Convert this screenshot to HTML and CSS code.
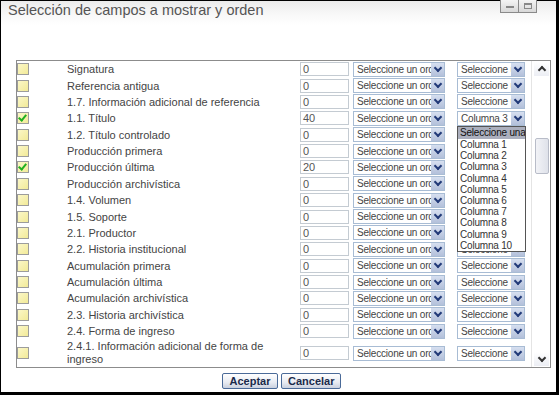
FILE: index.html
```html
<!DOCTYPE html>
<html lang="es">
<head>
    <meta charset="UTF-8">
    <meta name="viewport" content="width=device-width, initial-scale=1.0">
    <title>Selección de campos</title>
    <link rel="stylesheet" href="styles.css">
</head>
<body>
    <div class="ventana">
        <div class="cabecera">
            <h2 class="titulo">Selección de campos a mostrar y orden</h2>
            <div class="botones-ventana">
                <span class="bv"><svg width="10" height="8" viewBox="0 0 10 8"><rect x="1" y="4" width="8" height="2" fill="#888"/></svg></span>
                <span class="bv"><svg width="10" height="8" viewBox="0 0 10 8"><rect x="1.5" y="1.5" width="7" height="5" fill="none" stroke="#888"/><rect x="1" y="1" width="8" height="2" fill="#888"/></svg></span>
            </div>
        </div>

        <div class="panel">
            <div class="lista">
                <div class="fila"><span class="check"></span><span class="campo">Signatura</span><span class="caja">0</span><span class="combo orden"><span class="txt">Seleccione un orden</span><span class="flecha"></span></span><span class="combo columna"><span class="txt">Seleccione una</span><span class="flecha"></span></span></div>
                <div class="fila"><span class="check"></span><span class="campo">Referencia antigua</span><span class="caja">0</span><span class="combo orden"><span class="txt">Seleccione un orden</span><span class="flecha"></span></span><span class="combo columna"><span class="txt">Seleccione una</span><span class="flecha"></span></span></div>
                <div class="fila"><span class="check"></span><span class="campo">1.7. Información adicional de referencia</span><span class="caja">0</span><span class="combo orden"><span class="txt">Seleccione un orden</span><span class="flecha"></span></span><span class="combo columna"><span class="txt">Seleccione una</span><span class="flecha"></span></span></div>
                <div class="fila"><span class="check marcado"></span><span class="campo">1.1. Título</span><span class="caja">40</span><span class="combo orden"><span class="txt">Seleccione un orden</span><span class="flecha"></span></span><span class="combo columna"><span class="txt">Columna 3</span><span class="flecha"></span></span></div>
                <div class="fila"><span class="check"></span><span class="campo">1.2. Título controlado</span><span class="caja">0</span><span class="combo orden"><span class="txt">Seleccione un orden</span><span class="flecha"></span></span><span class="combo columna"><span class="txt">Seleccione una</span><span class="flecha"></span></span></div>
                <div class="fila"><span class="check"></span><span class="campo">Producción primera</span><span class="caja">0</span><span class="combo orden"><span class="txt">Seleccione un orden</span><span class="flecha"></span></span><span class="combo columna"><span class="txt">Seleccione una</span><span class="flecha"></span></span></div>
                <div class="fila"><span class="check marcado"></span><span class="campo">Producción última</span><span class="caja">20</span><span class="combo orden"><span class="txt">Seleccione un orden</span><span class="flecha"></span></span><span class="combo columna"><span class="txt">Seleccione una</span><span class="flecha"></span></span></div>
                <div class="fila"><span class="check"></span><span class="campo">Producción archivística</span><span class="caja">0</span><span class="combo orden"><span class="txt">Seleccione un orden</span><span class="flecha"></span></span><span class="combo columna"><span class="txt">Seleccione una</span><span class="flecha"></span></span></div>
                <div class="fila"><span class="check"></span><span class="campo">1.4. Volumen</span><span class="caja">0</span><span class="combo orden"><span class="txt">Seleccione un orden</span><span class="flecha"></span></span><span class="combo columna"><span class="txt">Seleccione una</span><span class="flecha"></span></span></div>
                <div class="fila"><span class="check"></span><span class="campo">1.5. Soporte</span><span class="caja">0</span><span class="combo orden"><span class="txt">Seleccione un orden</span><span class="flecha"></span></span><span class="combo columna"><span class="txt">Seleccione una</span><span class="flecha"></span></span></div>
                <div class="fila"><span class="check"></span><span class="campo">2.1. Productor</span><span class="caja">0</span><span class="combo orden"><span class="txt">Seleccione un orden</span><span class="flecha"></span></span><span class="combo columna"><span class="txt">Seleccione una</span><span class="flecha"></span></span></div>
                <div class="fila"><span class="check"></span><span class="campo">2.2. Historia institucional</span><span class="caja">0</span><span class="combo orden"><span class="txt">Seleccione un orden</span><span class="flecha"></span></span><span class="combo columna"><span class="txt">Seleccione una</span><span class="flecha"></span></span></div>
                <div class="fila"><span class="check"></span><span class="campo">Acumulación primera</span><span class="caja">0</span><span class="combo orden"><span class="txt">Seleccione un orden</span><span class="flecha"></span></span><span class="combo columna"><span class="txt">Seleccione una</span><span class="flecha"></span></span></div>
                <div class="fila"><span class="check"></span><span class="campo">Acumulación última</span><span class="caja">0</span><span class="combo orden"><span class="txt">Seleccione un orden</span><span class="flecha"></span></span><span class="combo columna"><span class="txt">Seleccione una</span><span class="flecha"></span></span></div>
                <div class="fila"><span class="check"></span><span class="campo">Acumulación archivística</span><span class="caja">0</span><span class="combo orden"><span class="txt">Seleccione un orden</span><span class="flecha"></span></span><span class="combo columna"><span class="txt">Seleccione una</span><span class="flecha"></span></span></div>
                <div class="fila"><span class="check"></span><span class="campo">2.3. Historia archivística</span><span class="caja">0</span><span class="combo orden"><span class="txt">Seleccione un orden</span><span class="flecha"></span></span><span class="combo columna"><span class="txt">Seleccione una</span><span class="flecha"></span></span></div>
                <div class="fila"><span class="check"></span><span class="campo">2.4. Forma de ingreso</span><span class="caja">0</span><span class="combo orden"><span class="txt">Seleccione un orden</span><span class="flecha"></span></span><span class="combo columna"><span class="txt">Seleccione una</span><span class="flecha"></span></span></div>
                <div class="fila doble"><span class="check"></span><span class="campo">2.4.1. Información adicional de forma de ingreso</span><span class="caja">0</span><span class="combo orden"><span class="txt">Seleccione un orden</span><span class="flecha"></span></span><span class="combo columna"><span class="txt">Seleccione una</span><span class="flecha"></span></span></div>

                <!-- desplegable abierto de la fila 1.1. Título -->
                <ul class="desplegable">
                    <li class="activo">Seleccione una</li>
                    <li>Columna 1</li>
                    <li>Columna 2</li>
                    <li>Columna 3</li>
                    <li>Columna 4</li>
                    <li>Columna 5</li>
                    <li>Columna 6</li>
                    <li>Columna 7</li>
                    <li>Columna 8</li>
                    <li>Columna 9</li>
                    <li>Columna 10</li>
                </ul>
            </div>
            <div class="scroll">
                <span class="sb-boton arriba"></span>
                <div class="sb-pista"><span class="sb-thumb"></span></div>
                <span class="sb-boton abajo"></span>
            </div>
        </div>

        <div class="pie">
            <button class="boto">Aceptar</button>
            <button class="boto">Cancelar</button>
        </div>
    </div>
</body>
</html>
```

FILE: styles.css
```css
html {
    height: 100%;
}
body {
    margin: 0;
    background: #000;
    font-family: 'Liberation Sans', Arial, sans-serif;
}

.ventana {
    width: 555px;
    height: 391px;
    margin: 1px 3px 3px 1px;
    background: #fff;
    display: flex;
    flex-direction: column;
}

.cabecera {
    height: 59px;
    display: flex;
    justify-content: space-between;
    align-items: flex-start;
    background: linear-gradient(180deg, #ebebeb 0px, #f7f7f7 12px, #fff 24px);
}

.titulo {
    margin: 1px 0 0 7px;
    font-size: 14.5px;
    font-weight: normal;
    color: #555;
    line-height: 17px;
}

.botones-ventana {
    display: flex;
    margin-right: 19px;
    margin-top: -2px;
}

.bv {
    width: 17px;
    height: 12px;
    border: 1px solid #8a8a8a;
    background: linear-gradient(180deg, #f4f4f4, #d8d8d8);
    display: flex;
    align-items: center;
    justify-content: center;
}

.bv + .bv {
    border-left: none;
}

.panel {
    margin-left: 15px;
    width: 535px;
    height: 308px;
    box-sizing: border-box;
    border: 1px solid #8c8c8c;
    display: flex;
}

.lista {
    flex: 1;
    position: relative;
}

.fila {
    display: grid;
    grid-template-columns: 50px 233px 53px 104px 70px;
    align-items: center;
    height: 16.375px;
    font-size: 11px;
    color: #444;
}

.fila.doble {
    height: 28px;
    line-height: 13px;
}

.check {
    width: 10px;
    height: 10px;
    border: 1px solid #9c9c9c;
    background: linear-gradient(135deg, #fbf7c8, #f2ea98);
    position: relative;
}

.check.marcado::after {
    content: "";
    position: absolute;
    left: 2px;
    top: 0px;
    width: 3px;
    height: 6px;
    border: solid #20b020;
    border-width: 0 2px 2px 0;
    transform: rotate(40deg);
}

.campo {
    white-space: normal;
}

.caja {
    width: 45px;
    height: 12px;
    border: 1px solid #c4cbd2;
    padding-left: 2px;
    line-height: 12px;
    color: #555;
    box-sizing: content-box;
}

.combo {
    height: 13px;
    border: 1px solid #a8bcd4;
    display: flex;
    background: #fff;
}

.combo.orden {
    width: 90px;
}

.combo.columna {
    width: 66px;
}

.combo .txt {
    flex: 1;
    overflow: hidden;
    white-space: nowrap;
    padding-left: 3px;
    line-height: 13px;
    font-size: 10px;
    letter-spacing: -0.2px;
    color: #444;
}

.flecha {
    width: 13px;
    height: 13px;
    background: linear-gradient(180deg, #d6dff0, #b3c0da);
    position: relative;
}

.flecha::after {
    content: "";
    position: absolute;
    left: 3.5px;
    top: 2px;
    width: 4px;
    height: 4px;
    border: solid #223a78;
    border-width: 0 2px 2px 0;
    transform: rotate(45deg);
}

.desplegable {
    position: absolute;
    left: 440px;
    top: 65px;
    width: 67px;
    margin: 0;
    padding: 0;
    list-style: none;
    border: 1px solid #555;
    background: #fff;
    font-size: 10px;
    letter-spacing: -0.2px;
    color: #333;
}

.desplegable li {
    height: 11.2px;
    line-height: 11px;
    padding-left: 2px;
    white-space: nowrap;
    overflow: hidden;
}

.desplegable li.activo {
    background: #abafbd;
    color: #111;
    height: 12px;
}

.scroll {
    width: 18px;
    border-left: 1px solid #e4e4e4;
    display: flex;
    flex-direction: column;
    background: #fff;
}

.sb-boton {
    height: 14px;
    margin: 1px 1px 1px 2px;
    position: relative;
    background: linear-gradient(180deg, #fff, #eceef4);
}

.sb-boton::after {
    content: "";
    position: absolute;
    left: 5px;
    width: 4px;
    height: 4px;
    border: solid #333;
    border-width: 0 2px 2px 0;
}

.sb-boton.arriba::after {
    top: 5px;
    transform: rotate(-135deg);
}

.sb-boton.abajo::after {
    top: 3px;
    transform: rotate(45deg);
}

.sb-pista {
    flex: 1;
    padding-top: 61px;
}

.sb-thumb {
    display: block;
    width: 12px;
    height: 34px;
    margin-left: 3px;
    border: 1px solid #b8bcc8;
    border-radius: 2px;
    background: linear-gradient(90deg, #f2f3f7, #dfe2ea) ;
}

.pie {
    display: flex;
    justify-content: center;
    gap: 3px;
    padding-top: 5px;
    padding-left: 6px;
}

.boto {
    height: 16px;
    padding: 0 6px;
    font-family: 'Liberation Sans', Arial, sans-serif;
    font-size: 11px;
    font-weight: bold;
    color: #1a2a4a;
    border: 1px solid #4a6a98;
    border-radius: 2px;
    background: linear-gradient(180deg, #fff 0%, #e8ebf2 60%, #c9d0de 100%);
    line-height: 14px;
}

.boto:first-child {
    width: 56px;
}

.boto:last-child {
    width: 60px;
}
```
